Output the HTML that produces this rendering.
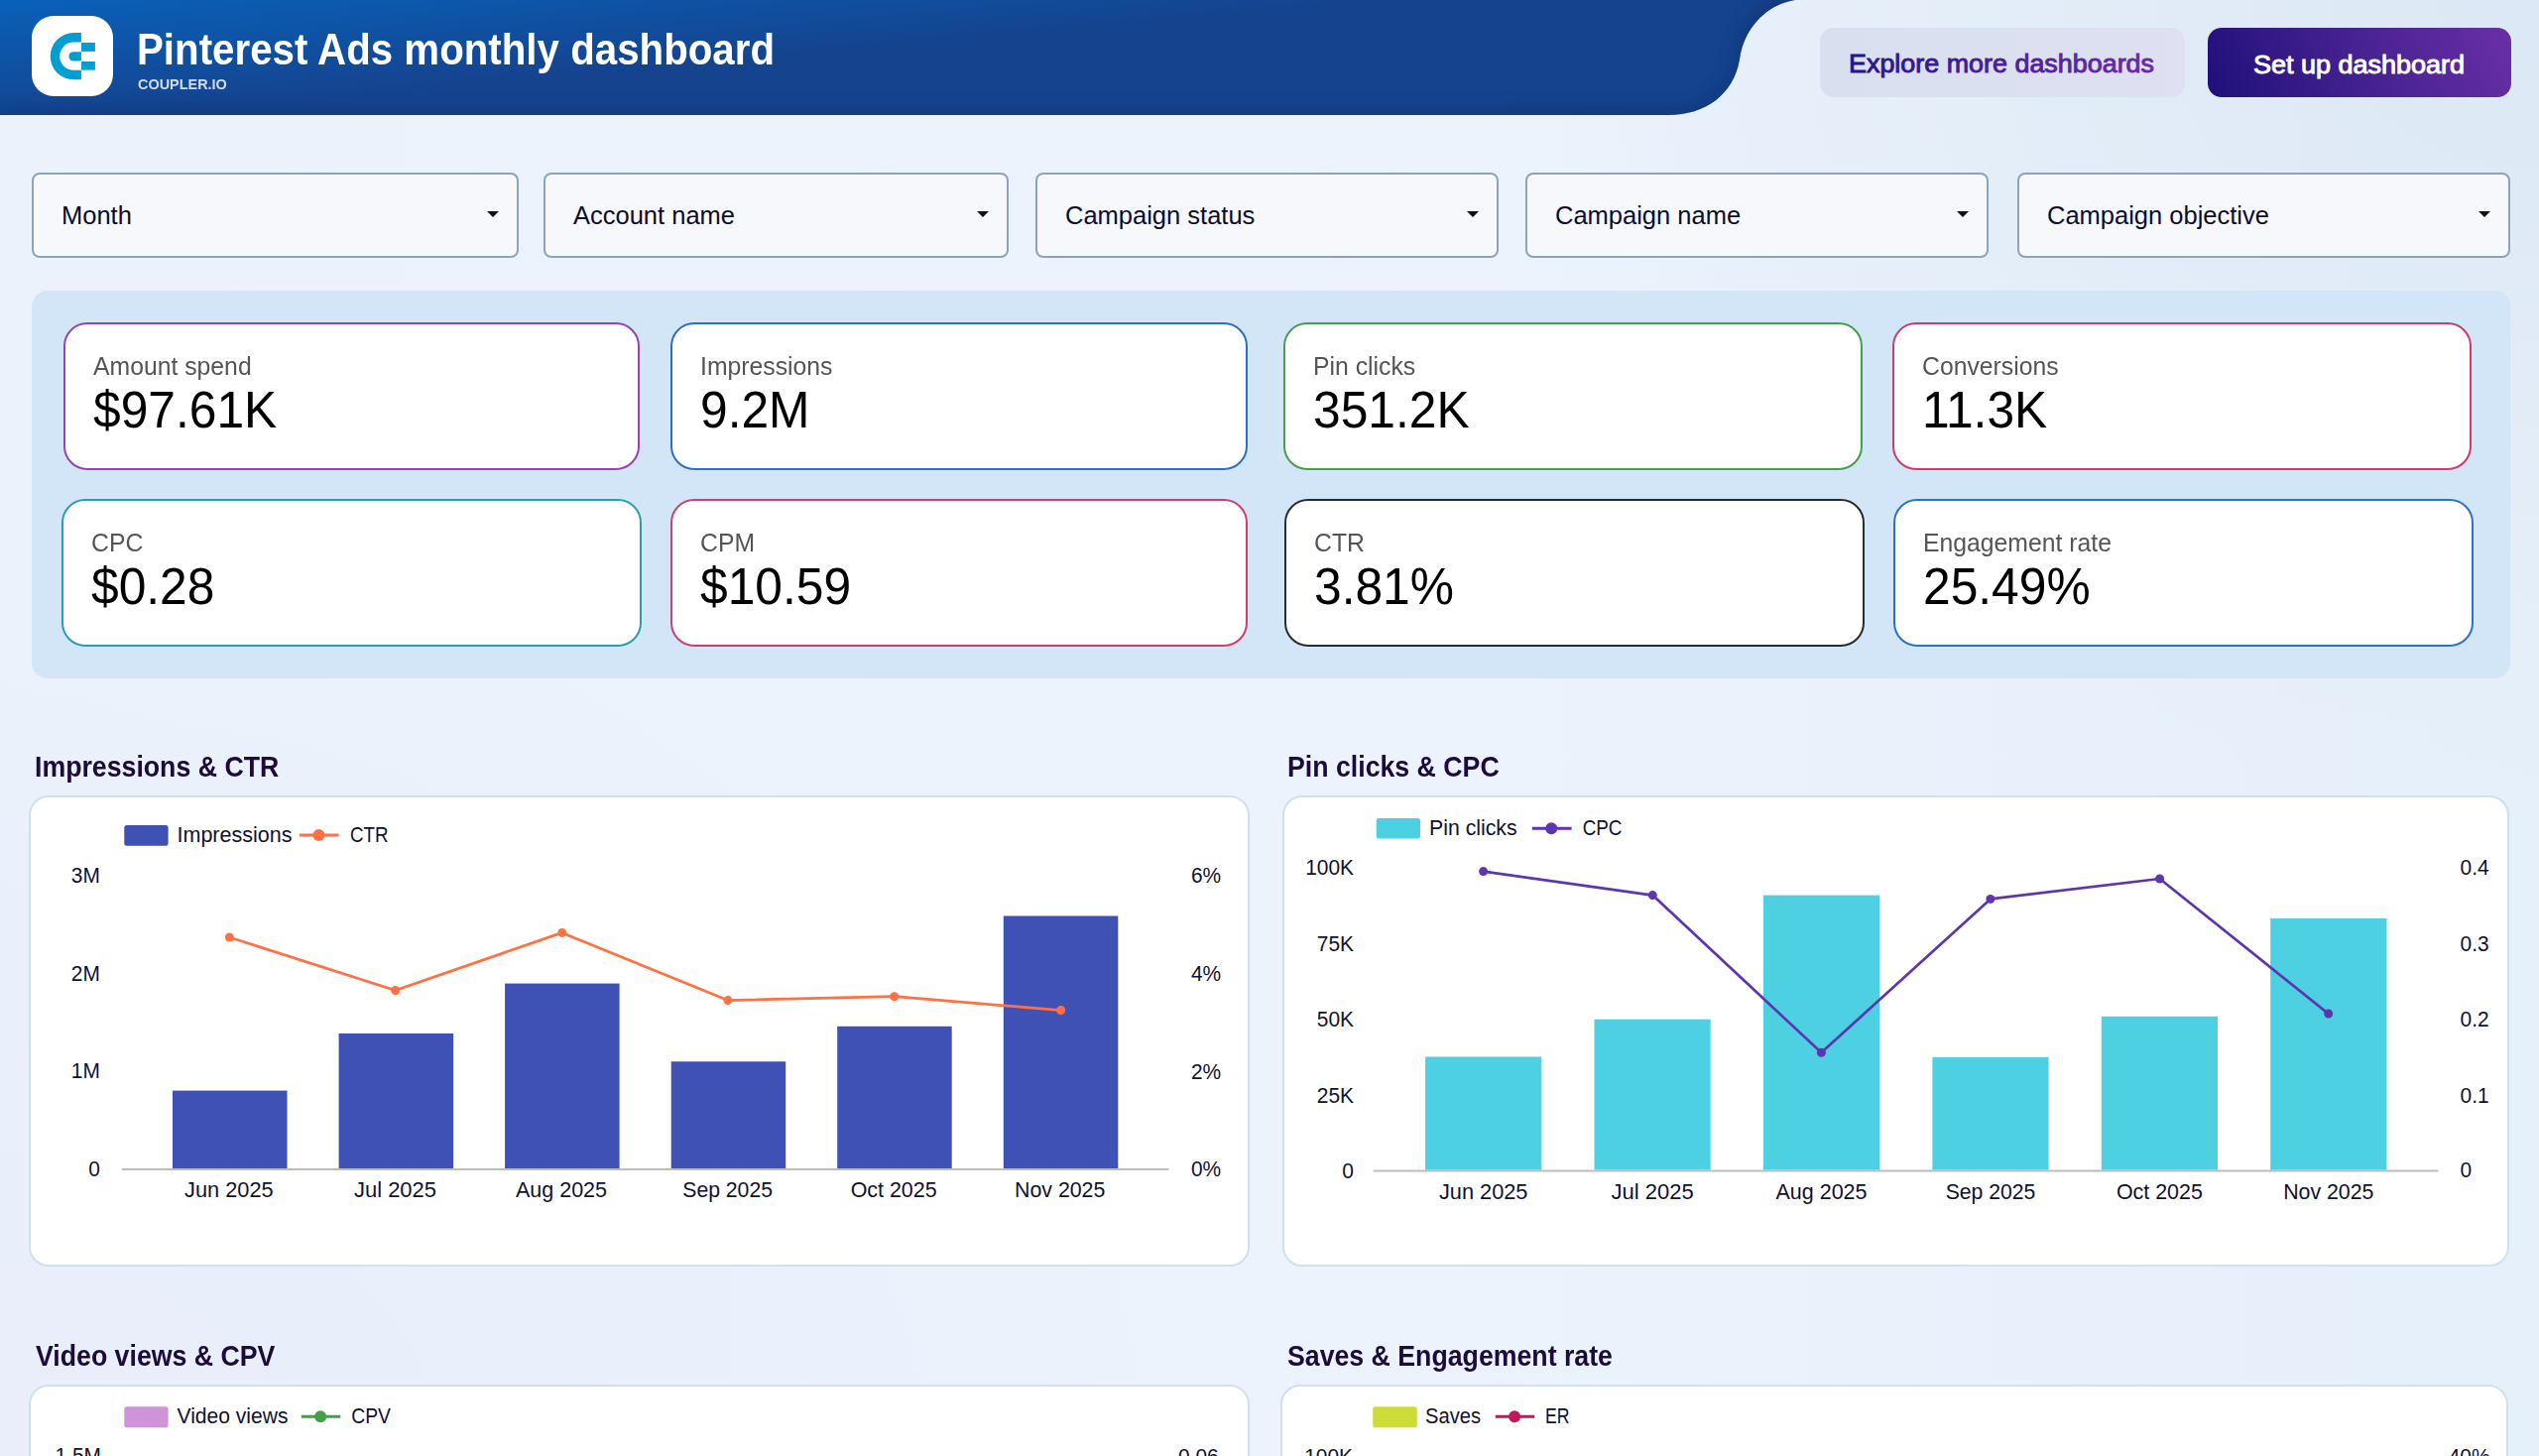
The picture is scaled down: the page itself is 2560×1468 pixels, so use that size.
<!DOCTYPE html>
<html><head><meta charset="utf-8">
<style>
*{margin:0;padding:0;box-sizing:border-box}
html,body{width:2560px;height:1468px;overflow:hidden}
body{font-family:"Liberation Sans",sans-serif;background:radial-gradient(ellipse 1000px 800px at 100% 0%,#dce8f5 0%,rgba(236,243,253,0) 100%),radial-gradient(ellipse 1300px 900px at 0% 100%,#e9eefa 0%,rgba(233,238,250,0) 100%),linear-gradient(90deg,#ebf2fc 0%,#ecf3fd 50%,#e6f0fa 100%);position:relative}
.abs{position:absolute}
.t{position:absolute;white-space:nowrap;line-height:1}
#hdr{position:absolute;left:0;top:0}
.logo{position:absolute;left:32px;top:16px;width:82px;height:81px;background:#fff;border-radius:22px}
.btn1{position:absolute;left:1835px;top:28px;width:368px;height:70px;border-radius:14px;background:linear-gradient(90deg,#d8e0f0,#dfe0f2)}
.btn2{position:absolute;left:2226px;top:28px;width:306px;height:70px;border-radius:14px;background:linear-gradient(65deg,#1f107a 0%,#42208e 45%,#6a2fa6 100%)}
.flt{position:absolute;top:174px;height:86px;border:2px solid #8da3b9;border-radius:8px;background:#f6f8fc}
.flt span{position:absolute;left:28px;top:29px;font-size:25.5px;color:#0d0c2c;line-height:1}
.flt i{position:absolute;top:37px;width:0;height:0;border-left:6px solid transparent;border-right:6px solid transparent;border-top:6px solid #111}
.panel{position:absolute;left:32px;top:293px;width:2499px;height:391px;background:#d3e6f7;border-radius:16px}
.kpi{position:absolute;background:#fff;border:2px solid;border-radius:24px}
.kpi .l{position:absolute;left:28px;top:30px;font-size:25.4px;color:#555;line-height:1;white-space:nowrap;transform:scaleX(0.975);transform-origin:0 0}
.kpi .v{position:absolute;left:28px;top:61px;font-size:51px;color:#000;line-height:1;white-space:nowrap;transform:scaleX(0.975);transform-origin:0 0}
.ctitle{position:absolute;font-size:29.5px;font-weight:bold;color:#1c0b3b;line-height:1;white-space:nowrap;transform:scaleX(0.905);transform-origin:0 0}
.card{position:absolute;background:#fff;border:2px solid #cfe1ec;border-radius:20px}
</style></head><body>
<svg id="hdr" width="2560" height="130" viewBox="0 0 2560 130">
<defs>
<linearGradient id="hg" gradientUnits="userSpaceOnUse" x1="0" y1="0" x2="11.5" y2="127.8">
<stop offset="0" stop-color="#0961b9"/>
<stop offset="1" stop-color="#15438e"/>
</linearGradient>
<clipPath id="hc"><path d="M0,0 L1810,0 C1775,6 1757,35 1754,60 C1748,95 1720,116 1682,116 L0,116 Z"/></clipPath>
<filter id="hb" x="-5%" y="-50%" width="110%" height="200%"><feGaussianBlur stdDeviation="8"/></filter>
</defs>
<path d="M0,0 L1810,0 C1775,6 1757,35 1754,60 C1748,95 1720,116 1682,116 L0,116 Z" fill="url(#hg)"/>
<g clip-path="url(#hc)"><path d="M-20,118 L1682,118 C1722,118 1750,96 1756,60 C1760,35 1777,4 1812,-2" fill="none" stroke="#0c2a66" stroke-width="16" opacity="0.4" filter="url(#hb)"/></g>
</svg>
<div class="logo">
<svg width="82" height="81" viewBox="0 0 82 81" style="position:absolute;left:0;top:0">
<path d="M49.9,17.1 L42.3,17.1 A23.6,23.6 0 0 0 42.3,64.3 L49.9,64.3 L49.9,54.8 L42.3,54.8 A14.1,14.1 0 0 1 42.3,26.6 L49.9,26.6 Z" fill="#009fd0"/>
<path d="M42.1,36.2 L49.9,36.2 L49.9,45.6 L42.1,45.6 A4.7,4.7 0 0 1 42.1,36.2 Z" fill="#009fd0"/>
<rect x="49.9" y="27" width="14" height="8.9" fill="#009fd0"/>
<rect x="49.9" y="46" width="14" height="8.6" fill="#009fd0"/>
</svg>
</div>
<div class="t" style="left:138px;top:27px;font-size:45px;font-weight:bold;color:#fff;transform:scaleX(0.895);transform-origin:0 0">Pinterest Ads monthly dashboard</div>
<div class="t" style="left:139px;top:77px;font-size:15px;font-weight:bold;color:#d3dbea;transform:scaleX(0.962);transform-origin:0 0">COUPLER.IO</div>
<div class="btn1"><svg width="368" height="70" style="position:absolute;left:0;top:0" font-family="Liberation Sans, sans-serif"><defs><linearGradient id="tg" x1="0" y1="0" x2="1" y2="0"><stop offset="0" stop-color="#25148a"/><stop offset="1" stop-color="#6b2ba8"/></linearGradient></defs><text x="29" y="45.4" font-size="26" fill="url(#tg)" stroke="url(#tg)" stroke-width="0.9" textLength="308" lengthAdjust="spacingAndGlyphs">Explore more dashboards</text></svg></div>
<div class="btn2"><svg width="306" height="70" style="position:absolute;left:0;top:0" font-family="Liberation Sans, sans-serif"><text x="46" y="46.2" font-size="26" fill="#fff" stroke="#fff" stroke-width="0.9" textLength="213" lengthAdjust="spacingAndGlyphs">Set up dashboard</text></svg></div>

<div class="flt" style="left:32px;width:491px"><span>Month</span><i style="left:457px"></i></div>
<div class="flt" style="left:548px;width:469px"><span>Account name</span><i style="left:435px"></i></div>
<div class="flt" style="left:1044px;width:467px"><span>Campaign status</span><i style="left:433px"></i></div>
<div class="flt" style="left:1538px;width:467px"><span>Campaign name</span><i style="left:433px"></i></div>
<div class="flt" style="left:2034px;width:497px"><span>Campaign objective</span><i style="left:463px"></i></div>

<div class="panel"></div>
<div class="kpi" style="left:64px;top:325px;width:581px;height:149px;border-color:#9a40b8"><div class="l">Amount spend</div><div class="v">$97.61K</div></div>
<div class="kpi" style="left:676px;top:325px;width:582px;height:149px;border-color:#2d6ec8"><div class="l">Impressions</div><div class="v">9.2M</div></div>
<div class="kpi" style="left:1294px;top:325px;width:584px;height:149px;border-color:#45a04a"><div class="l">Pin clicks</div><div class="v">351.2K</div></div>
<div class="kpi" style="left:1908px;top:325px;width:584px;height:149px;border-color:#cf3c6c"><div class="l">Conversions</div><div class="v">11.3K</div></div>
<div class="kpi" style="left:62px;top:503px;width:585px;height:149px;border-color:#26a0ae"><div class="l">CPC</div><div class="v">$0.28</div></div>
<div class="kpi" style="left:676px;top:503px;width:582px;height:149px;border-color:#d0406e"><div class="l">CPM</div><div class="v">$10.59</div></div>
<div class="kpi" style="left:1295px;top:503px;width:585px;height:149px;border-color:#2b2b2b;border-width:2.5px"><div class="l">CTR</div><div class="v">3.81%</div></div>
<div class="kpi" style="left:1909px;top:503px;width:585px;height:149px;border-color:#2f70c8"><div class="l">Engagement rate</div><div class="v">25.49%</div></div>

<div class="ctitle" style="left:35px;top:758px">Impressions &amp; CTR</div>
<div class="ctitle" style="left:1298px;top:758px">Pin clicks &amp; CPC</div>
<div class="card" style="left:29px;top:802px;width:1231px;height:475px"></div>
<div class="card" style="left:1293px;top:802px;width:1237px;height:475px"></div>

<div class="ctitle" style="left:36px;top:1352px">Video views &amp; CPV</div>
<div class="ctitle" style="left:1298px;top:1352px">Saves &amp; Engagement rate</div>
<div class="card" style="left:29px;top:1396px;width:1231px;height:200px"></div>
<div class="card" style="left:1291px;top:1396px;width:1238px;height:200px"></div>
<!--CHARTS-->
<svg class="abs" style="left:0;top:0" width="2560" height="1468" viewBox="0 0 2560 1468" font-family="Liberation Sans, sans-serif">
<rect x="125.3" y="832" width="44.3" height="20.7" rx="2.5" fill="#3f51b5"/>
<text x="178.5" y="849.2" font-size="21.5" fill="#10112e" text-anchor="start" textLength="116" lengthAdjust="spacingAndGlyphs">Impressions</text>
<line x1="302" y1="842" x2="341.6" y2="842" stroke="#ff7043" stroke-width="3"/><circle cx="321.4" cy="842" r="6" fill="#ff7043"/>
<text x="353" y="849.2" font-size="21.5" fill="#10112e" text-anchor="start" textLength="38.5" lengthAdjust="spacingAndGlyphs">CTR</text>
<text transform="translate(100.8,890) scale(0.95,1)" font-size="22" fill="#10112e" text-anchor="end">3M</text>
<text transform="translate(100.8,989) scale(0.95,1)" font-size="22" fill="#10112e" text-anchor="end">2M</text>
<text transform="translate(100.8,1087) scale(0.95,1)" font-size="22" fill="#10112e" text-anchor="end">1M</text>
<text transform="translate(100.8,1186) scale(0.95,1)" font-size="22" fill="#10112e" text-anchor="end">0</text>
<text transform="translate(1201,889.5) scale(0.95,1)" font-size="22" fill="#10112e" text-anchor="start">6%</text>
<text transform="translate(1201,988.5) scale(0.95,1)" font-size="22" fill="#10112e" text-anchor="start">4%</text>
<text transform="translate(1201,1087.5) scale(0.95,1)" font-size="22" fill="#10112e" text-anchor="start">2%</text>
<text transform="translate(1201,1186) scale(0.95,1)" font-size="22" fill="#10112e" text-anchor="start">0%</text>
<line x1="122.8" y1="1179" x2="1178.4" y2="1179" stroke="#bdbdbd" stroke-width="2"/>
<rect x="174" y="1099.6" width="115.5" height="78.4" fill="#3f51b5"/>
<text x="230.9" y="1207.2" font-size="22" fill="#10112e" text-anchor="middle" textLength="89.6" lengthAdjust="spacingAndGlyphs">Jun 2025</text>
<rect x="341.6" y="1042" width="115.5" height="136" fill="#3f51b5"/>
<text x="398.5" y="1207.2" font-size="22" fill="#10112e" text-anchor="middle" textLength="83.0" lengthAdjust="spacingAndGlyphs">Jul 2025</text>
<rect x="509.1" y="991.6" width="115.5" height="186.4" fill="#3f51b5"/>
<text x="566" y="1207.2" font-size="22" fill="#10112e" text-anchor="middle" textLength="92.1" lengthAdjust="spacingAndGlyphs">Aug 2025</text>
<rect x="676.7" y="1070.3" width="115.5" height="107.7" fill="#3f51b5"/>
<text x="733.6" y="1207.2" font-size="22" fill="#10112e" text-anchor="middle" textLength="90.7" lengthAdjust="spacingAndGlyphs">Sep 2025</text>
<rect x="844.2" y="1034.8" width="115.5" height="143.2" fill="#3f51b5"/>
<text x="901.1" y="1207.2" font-size="22" fill="#10112e" text-anchor="middle" textLength="86.9" lengthAdjust="spacingAndGlyphs">Oct 2025</text>
<rect x="1011.8" y="923.5" width="115.5" height="254.5" fill="#3f51b5"/>
<text x="1068.7" y="1207.2" font-size="22" fill="#10112e" text-anchor="middle" textLength="91.3" lengthAdjust="spacingAndGlyphs">Nov 2025</text>
<polyline points="231.4,945 398.6,998.5 566.7,940.4 733.9,1008.6 901.7,1004.7 1069.7,1018.6" fill="none" stroke="#ff7043" stroke-width="2.7" stroke-linejoin="round"/>
<circle cx="231.4" cy="945" r="4.5" fill="#ff7043"/>
<circle cx="398.6" cy="998.5" r="4.5" fill="#ff7043"/>
<circle cx="566.7" cy="940.4" r="4.5" fill="#ff7043"/>
<circle cx="733.9" cy="1008.6" r="4.5" fill="#ff7043"/>
<circle cx="901.7" cy="1004.7" r="4.5" fill="#ff7043"/>
<circle cx="1069.7" cy="1018.6" r="4.5" fill="#ff7043"/>
<rect x="1387.7" y="825" width="44.3" height="20.6" rx="2.5" fill="#4dd0e1"/>
<text x="1441" y="841.6" font-size="21.5" fill="#10112e" text-anchor="start" textLength="88.6" lengthAdjust="spacingAndGlyphs">Pin clicks</text>
<line x1="1544.8" y1="835.3" x2="1584.6" y2="835.3" stroke="#5e35b1" stroke-width="3"/><circle cx="1564.2" cy="835.3" r="6" fill="#5e35b1"/>
<text x="1595.7" y="841.6" font-size="21.5" fill="#10112e" text-anchor="start" textLength="39.8" lengthAdjust="spacingAndGlyphs">CPC</text>
<text transform="translate(1365,882.4) scale(0.95,1)" font-size="22" fill="#10112e" text-anchor="end">100K</text>
<text transform="translate(1365,959.3) scale(0.95,1)" font-size="22" fill="#10112e" text-anchor="end">75K</text>
<text transform="translate(1365,1035.3) scale(0.95,1)" font-size="22" fill="#10112e" text-anchor="end">50K</text>
<text transform="translate(1365,1112.2) scale(0.95,1)" font-size="22" fill="#10112e" text-anchor="end">25K</text>
<text transform="translate(1365,1187.8) scale(0.95,1)" font-size="22" fill="#10112e" text-anchor="end">0</text>
<text transform="translate(2480.6,882.2) scale(0.95,1)" font-size="22" fill="#10112e" text-anchor="start">0.4</text>
<text transform="translate(2480.6,959) scale(0.95,1)" font-size="22" fill="#10112e" text-anchor="start">0.3</text>
<text transform="translate(2480.6,1034.8) scale(0.95,1)" font-size="22" fill="#10112e" text-anchor="start">0.2</text>
<text transform="translate(2480.6,1111.6) scale(0.95,1)" font-size="22" fill="#10112e" text-anchor="start">0.1</text>
<text transform="translate(2480.6,1187.2) scale(0.95,1)" font-size="22" fill="#10112e" text-anchor="start">0</text>
<line x1="1384.7" y1="1180.5" x2="2458.4" y2="1180.5" stroke="#bdbdbd" stroke-width="2"/>
<rect x="1437.1" y="1065.5" width="117.2" height="114" fill="#4dd0e1"/>
<text x="1495.7" y="1208.7" font-size="22" fill="#10112e" text-anchor="middle" textLength="89.6" lengthAdjust="spacingAndGlyphs">Jun 2025</text>
<rect x="1607.5" y="1027.7" width="117.2" height="151.8" fill="#4dd0e1"/>
<text x="1666.1" y="1208.7" font-size="22" fill="#10112e" text-anchor="middle" textLength="83.0" lengthAdjust="spacingAndGlyphs">Jul 2025</text>
<rect x="1777.9" y="902.6" width="117.2" height="276.9" fill="#4dd0e1"/>
<text x="1836.5" y="1208.7" font-size="22" fill="#10112e" text-anchor="middle" textLength="92.1" lengthAdjust="spacingAndGlyphs">Aug 2025</text>
<rect x="1948.4" y="1065.8" width="117.2" height="113.7" fill="#4dd0e1"/>
<text x="2007" y="1208.7" font-size="22" fill="#10112e" text-anchor="middle" textLength="90.7" lengthAdjust="spacingAndGlyphs">Sep 2025</text>
<rect x="2118.8" y="1024.8" width="117.2" height="154.7" fill="#4dd0e1"/>
<text x="2177.4" y="1208.7" font-size="22" fill="#10112e" text-anchor="middle" textLength="86.9" lengthAdjust="spacingAndGlyphs">Oct 2025</text>
<rect x="2289.2" y="925.9" width="117.2" height="253.6" fill="#4dd0e1"/>
<text x="2347.8" y="1208.7" font-size="22" fill="#10112e" text-anchor="middle" textLength="91.3" lengthAdjust="spacingAndGlyphs">Nov 2025</text>
<polyline points="1495.6,878.6 1666.3,902.6 1836.4,1061.3 2006.9,906.4 2177.6,886 2347.7,1022.1" fill="none" stroke="#5e35b1" stroke-width="2.7" stroke-linejoin="round"/>
<circle cx="1495.6" cy="878.6" r="4.5" fill="#5e35b1"/>
<circle cx="1666.3" cy="902.6" r="4.5" fill="#5e35b1"/>
<circle cx="1836.4" cy="1061.3" r="4.5" fill="#5e35b1"/>
<circle cx="2006.9" cy="906.4" r="4.5" fill="#5e35b1"/>
<circle cx="2177.6" cy="886" r="4.5" fill="#5e35b1"/>
<circle cx="2347.7" cy="1022.1" r="4.5" fill="#5e35b1"/>
<rect x="125.3" y="1418.2" width="44.3" height="21" rx="2.5" fill="#ce93d8"/>
<text x="178.5" y="1434.6" font-size="21.5" fill="#10112e" text-anchor="start" textLength="112" lengthAdjust="spacingAndGlyphs">Video views</text>
<line x1="303.8" y1="1428.3" x2="343.3" y2="1428.3" stroke="#43a047" stroke-width="3"/><circle cx="323.2" cy="1428.3" r="6" fill="#43a047"/>
<text x="354.2" y="1434.6" font-size="21.5" fill="#10112e" text-anchor="start" textLength="39.8" lengthAdjust="spacingAndGlyphs">CPV</text>
<text transform="translate(102,1475.2) scale(0.95,1)" font-size="22" fill="#10112e" text-anchor="end">1.5M</text>
<text transform="translate(1188,1475.5) scale(0.95,1)" font-size="22" fill="#10112e" text-anchor="start">0.06</text>
<rect x="1384.2" y="1418.2" width="44.6" height="21" rx="2.5" fill="#cddc39"/>
<text x="1437.1" y="1434.6" font-size="21.5" fill="#10112e" text-anchor="start" textLength="56" lengthAdjust="spacingAndGlyphs">Saves</text>
<line x1="1507.7" y1="1428.3" x2="1547.3" y2="1428.3" stroke="#c2185b" stroke-width="3"/><circle cx="1527.1" cy="1428.3" r="6" fill="#c2185b"/>
<text x="1558.1" y="1434.6" font-size="21.5" fill="#10112e" text-anchor="start" textLength="24.5" lengthAdjust="spacingAndGlyphs">ER</text>
<text transform="translate(1364,1475.5) scale(0.95,1)" font-size="22" fill="#10112e" text-anchor="end">100K</text>
<text transform="translate(2510.5,1475.5) scale(0.95,1)" font-size="22" fill="#10112e" text-anchor="end">40%</text>
</svg>
<!--/CHARTS-->
</body></html>
